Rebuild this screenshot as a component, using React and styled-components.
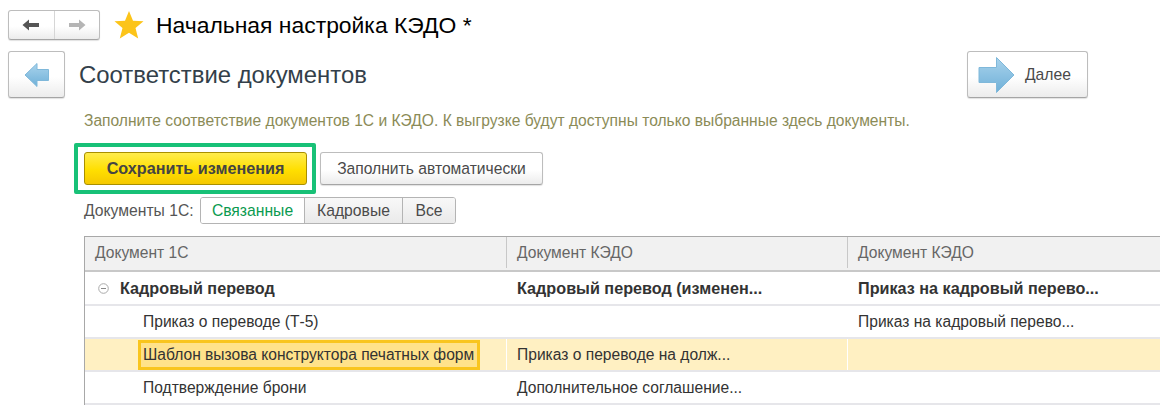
import React from 'react';
import styled, { createGlobalStyle } from 'styled-components';

const GlobalStyle = createGlobalStyle`
  html, body {
    margin: 0;
    padding: 0;
    background: #fff;
    overflow: hidden;
  }
  body {
    font-family: "Liberation Sans", Arial, sans-serif;
  }
`;

const Page = styled.div`
  width: 1160px;
  height: 408px;
  overflow: hidden;
  padding: 10px 0 0 8px;
  box-sizing: border-box;
  display: flex;
  flex-direction: column;
`;

const TitleBar = styled.div`
  display: flex;
  align-items: center;
  height: 30px;
`;

const raised = `
  border: 1px solid #bdbdbd;
  border-bottom-color: #a5a5a5;
  border-radius: 3px;
  background: linear-gradient(#ffffff 55%, #ececec);
  box-shadow: 0 1px 1px rgba(0, 0, 0, 0.12);
  box-sizing: border-box;
`;

const NavGroup = styled.div`
  ${raised}
  display: flex;
  width: 92px;
  height: 30px;
`;

const NavCell = styled.div`
  width: 46px;
  display: flex;
  align-items: center;
  justify-content: center;
  & + & {
    border-left: 1px solid #d6d6d6;
  }
`;

const StarWrap = styled.div`
  margin-left: 14px;
  width: 30px;
  height: 30px;
`;

const WindowTitle = styled.div`
  margin-left: 12px;
  font-size: 22.9px;
  color: #000;
  white-space: nowrap;
`;

const FormHeader = styled.div`
  display: flex;
  align-items: center;
  height: 47px;
  margin-top: 11px;
  width: 1080px;
`;

const IconButton = styled.div`
  ${raised}
  width: 57px;
  height: 47px;
  display: flex;
  align-items: center;
  justify-content: center;
`;

const FormTitle = styled.div`
  margin-left: 14px;
  font-size: 23.9px;
  color: #333f4a;
  white-space: nowrap;
  flex: 1;
`;

const NextButton = styled.div`
  ${raised}
  width: 121px;
  height: 47px;
  display: flex;
  align-items: center;
  padding-left: 10px;
  gap: 10px;
  font-size: 15.7px;
  color: #4a4a4a;
`;

const Body = styled.div`
  padding-left: 76px;
  display: flex;
  flex-direction: column;
`;

const Hint = styled.div`
  margin-top: 15px;
  height: 16px;
  line-height: 16px;
  font-size: 15.6px;
  color: #8b8b57;
  white-space: nowrap;
`;

const Actions = styled.div`
  display: flex;
  align-items: center;
  margin-top: 14px;
  height: 51px;
  margin-left: -10px;
`;

const Highlight = styled.div`
  width: 242px;
  height: 51px;
  border: 4px solid #18c177;
  border-radius: 2px;
  box-sizing: border-box;
  padding: 5px 0 0 6px;
`;

const PrimaryButton = styled.div`
  width: 223px;
  height: 33px;
  box-sizing: border-box;
  border: 1px solid #a98f00;
  border-radius: 3px;
  background: linear-gradient(#ffec4d, #ffdf00 55%, #f5c800);
  display: flex;
  align-items: center;
  justify-content: center;
  font-size: 16.2px;
  font-weight: bold;
  color: #444;
`;

const SecondaryButton = styled.div`
  ${raised}
  margin-left: 4px;
  width: 223px;
  height: 33px;
  display: flex;
  align-items: center;
  justify-content: center;
  font-size: 15.65px;
  color: #4a4a4a;
`;

const FilterRow = styled.div`
  display: flex;
  align-items: center;
  margin-top: 3px;
  height: 27px;
`;

const FilterLabel = styled.div`
  width: 116px;
  font-size: 15.7px;
  color: #555;
  white-space: nowrap;
  padding-top: 1px;
`;

const Segments = styled.div`
  display: flex;
  height: 27px;
  border: 1px solid #b4b4b4;
  border-radius: 3px;
  box-sizing: border-box;
  overflow: hidden;
`;

const Segment = styled.div`
  width: ${p => p.$w}px;
  box-sizing: border-box;
  display: flex;
  align-items: center;
  justify-content: center;
  font-size: 15.7px;
  color: ${p => (p.$active ? '#0a9a50' : '#4a4a4a')};
  background: ${p => (p.$active ? '#fff' : 'linear-gradient(#f8f8f8, #eaeaea)')};
  & + & {
    border-left: 1px solid #b4b4b4;
  }
`;

const Table = styled.div`
  margin-top: 12px;
  border-top: 1px solid #a8a8a8;
  border-left: 1px solid #a8a8a8;
  width: 1076px;
  box-sizing: border-box;
  font-size: 15.6px;
`;

const Row = styled.div`
  display: grid;
  grid-template-columns: 421px 1px 340px 1px 1fr;
  height: ${p => p.$h}px;
  box-sizing: border-box;
  padding-bottom: ${p => (p.$head ? '2px' : '0')};
  border-bottom: ${p => (p.$head ? '2px solid #c8c8c8' : '2px solid #e6e6ea')};
  background: ${p => (p.$head ? '#f1f1f1' : p.$selected ? '#fff0c2' : '#fff')};
  font-weight: ${p => (p.$bold ? 'bold' : 'normal')};
  font-size: ${p => (p.$bold ? '16.2px' : 'inherit')};
  color: ${p => (p.$head ? '#666' : '#333')};
`;

const Cell = styled.div`
  display: flex;
  align-items: center;
  padding-left: ${p => p.$indent ?? 10}px;
  white-space: nowrap;
  overflow: hidden;
`;

const Divider = styled.div`
  background: ${p => (p.$head ? '#c8c8c8' : p.$selected ? '#fff' : 'transparent')};
`;

const FocusText = styled.div`
  height: 30px;
  display: flex;
  align-items: center;
  box-sizing: border-box;
  border: 3px solid #f9c51e;
  background: #ffe28a;
  padding: 0 3px 0 2px;
  margin-left: -5px;
`;

const Toggle = styled.svg`
  margin: 0 11px 0 -1px;
  flex: none;
`;

const ArrowLeft = ({ color }) => (
  <svg width="18" height="12" viewBox="0 0 18 12">
    <path d="M0.5 6 L7 0.5 V4 H17 V8 H7 V11.5 Z" fill={color} />
  </svg>
);

const ArrowRight = ({ color }) => (
  <svg width="18" height="12" viewBox="0 0 18 12">
    <path d="M17.5 6 L11 0.5 V4 H1 V8 H11 V11.5 Z" fill={color} />
  </svg>
);

const Star = () => (
  <svg width="30" height="30" viewBox="0 0 30 30">
    <path
      d="M15 1 L19 10.7 L29.5 11.2 L21.5 18 L24.2 28.5 L15 22.8 L5.8 28.5 L8.5 18 L0.5 11.2 L11 10.7 Z"
      fill="#fcc419"
    />
  </svg>
);

const BackArrow = () => (
  <svg width="26" height="28" viewBox="0 0 26 28">
    <defs>
      <linearGradient id="backFill" x1="0" y1="0" x2="0" y2="1">
        <stop offset="0" stopColor="#a9d3ec" />
        <stop offset="1" stopColor="#6fb0d8" />
      </linearGradient>
    </defs>
    <path
      d="M1 14 L13 2.5 V8.5 H24.5 V19.5 H13 V25.5 Z"
      fill="url(#backFill)"
      stroke="#7fb8da"
      strokeWidth="1"
    />
  </svg>
);

const NextArrow = () => (
  <svg width="37" height="38" viewBox="0 0 37 38">
    <defs>
      <linearGradient id="nextFill" x1="0" y1="0" x2="0" y2="1">
        <stop offset="0" stopColor="#a9d3ec" />
        <stop offset="1" stopColor="#6fb0d8" />
      </linearGradient>
    </defs>
    <path
      d="M36 19 L18.5 1.5 V11.5 H1 V26.5 H18.5 V36.5 Z"
      fill="url(#nextFill)"
      stroke="#7fb8da"
      strokeWidth="1"
    />
  </svg>
);

export default function App() {
  return (
    <>
      <GlobalStyle />
      <Page>
        <TitleBar>
          <NavGroup>
            <NavCell><ArrowLeft color="#555" /></NavCell>
            <NavCell><ArrowRight color="#b5b5b5" /></NavCell>
          </NavGroup>
          <StarWrap><Star /></StarWrap>
          <WindowTitle>Начальная настройка КЭДО *</WindowTitle>
        </TitleBar>

        <FormHeader>
          <IconButton><BackArrow /></IconButton>
          <FormTitle>Соответствие документов</FormTitle>
          <NextButton>
            <NextArrow />
            Далее
          </NextButton>
        </FormHeader>

        <Body>
          <Hint>Заполните соответствие документов 1С и КЭДО. К выгрузке будут доступны только выбранные здесь документы.</Hint>

          <Actions>
            <Highlight>
              <PrimaryButton>Сохранить изменения</PrimaryButton>
            </Highlight>
            <SecondaryButton>Заполнить автоматически</SecondaryButton>
          </Actions>

          <FilterRow>
            <FilterLabel>Документы 1С:</FilterLabel>
            <Segments>
              <Segment $w={103} $active>Связанные</Segment>
              <Segment $w={98}>Кадровые</Segment>
              <Segment $w={53}>Все</Segment>
            </Segments>
          </FilterRow>

          <Table>
            <Row $head $h={35}>
              <Cell>Документ 1С</Cell>
              <Divider $head />
              <Cell>Документ КЭДО</Cell>
              <Divider $head />
              <Cell>Документ КЭДО</Cell>
            </Row>
            <Row $bold $h={34}>
              <Cell $indent={14}>
                <Toggle width="11" height="11" viewBox="0 0 11 11">
                  <circle cx="5.5" cy="5.5" r="4.8" fill="none" stroke="#aaa" />
                  <path d="M3 5.5 H8" stroke="#888" />
                </Toggle>
                Кадровый перевод
              </Cell>
              <Divider />
              <Cell>Кадровый перевод (изменен...</Cell>
              <Divider />
              <Cell>Приказ на кадровый перево...</Cell>
            </Row>
            <Row $h={33}>
              <Cell $indent={58}>Приказ о переводе (Т-5)</Cell>
              <Divider />
              <Cell />
              <Divider />
              <Cell>Приказ на кадровый перево...</Cell>
            </Row>
            <Row $selected $h={33}>
              <Cell $indent={58}>
                <FocusText>Шаблон вызова конструктора печатных форм</FocusText>
              </Cell>
              <Divider $selected />
              <Cell>Приказ о переводе на долж...</Cell>
              <Divider $selected />
              <Cell />
            </Row>
            <Row $h={33}>
              <Cell $indent={58}>Подтверждение брони</Cell>
              <Divider />
              <Cell>Дополнительное соглашение...</Cell>
              <Divider />
              <Cell />
            </Row>
          </Table>
        </Body>
      </Page>
    </>
  );
}
